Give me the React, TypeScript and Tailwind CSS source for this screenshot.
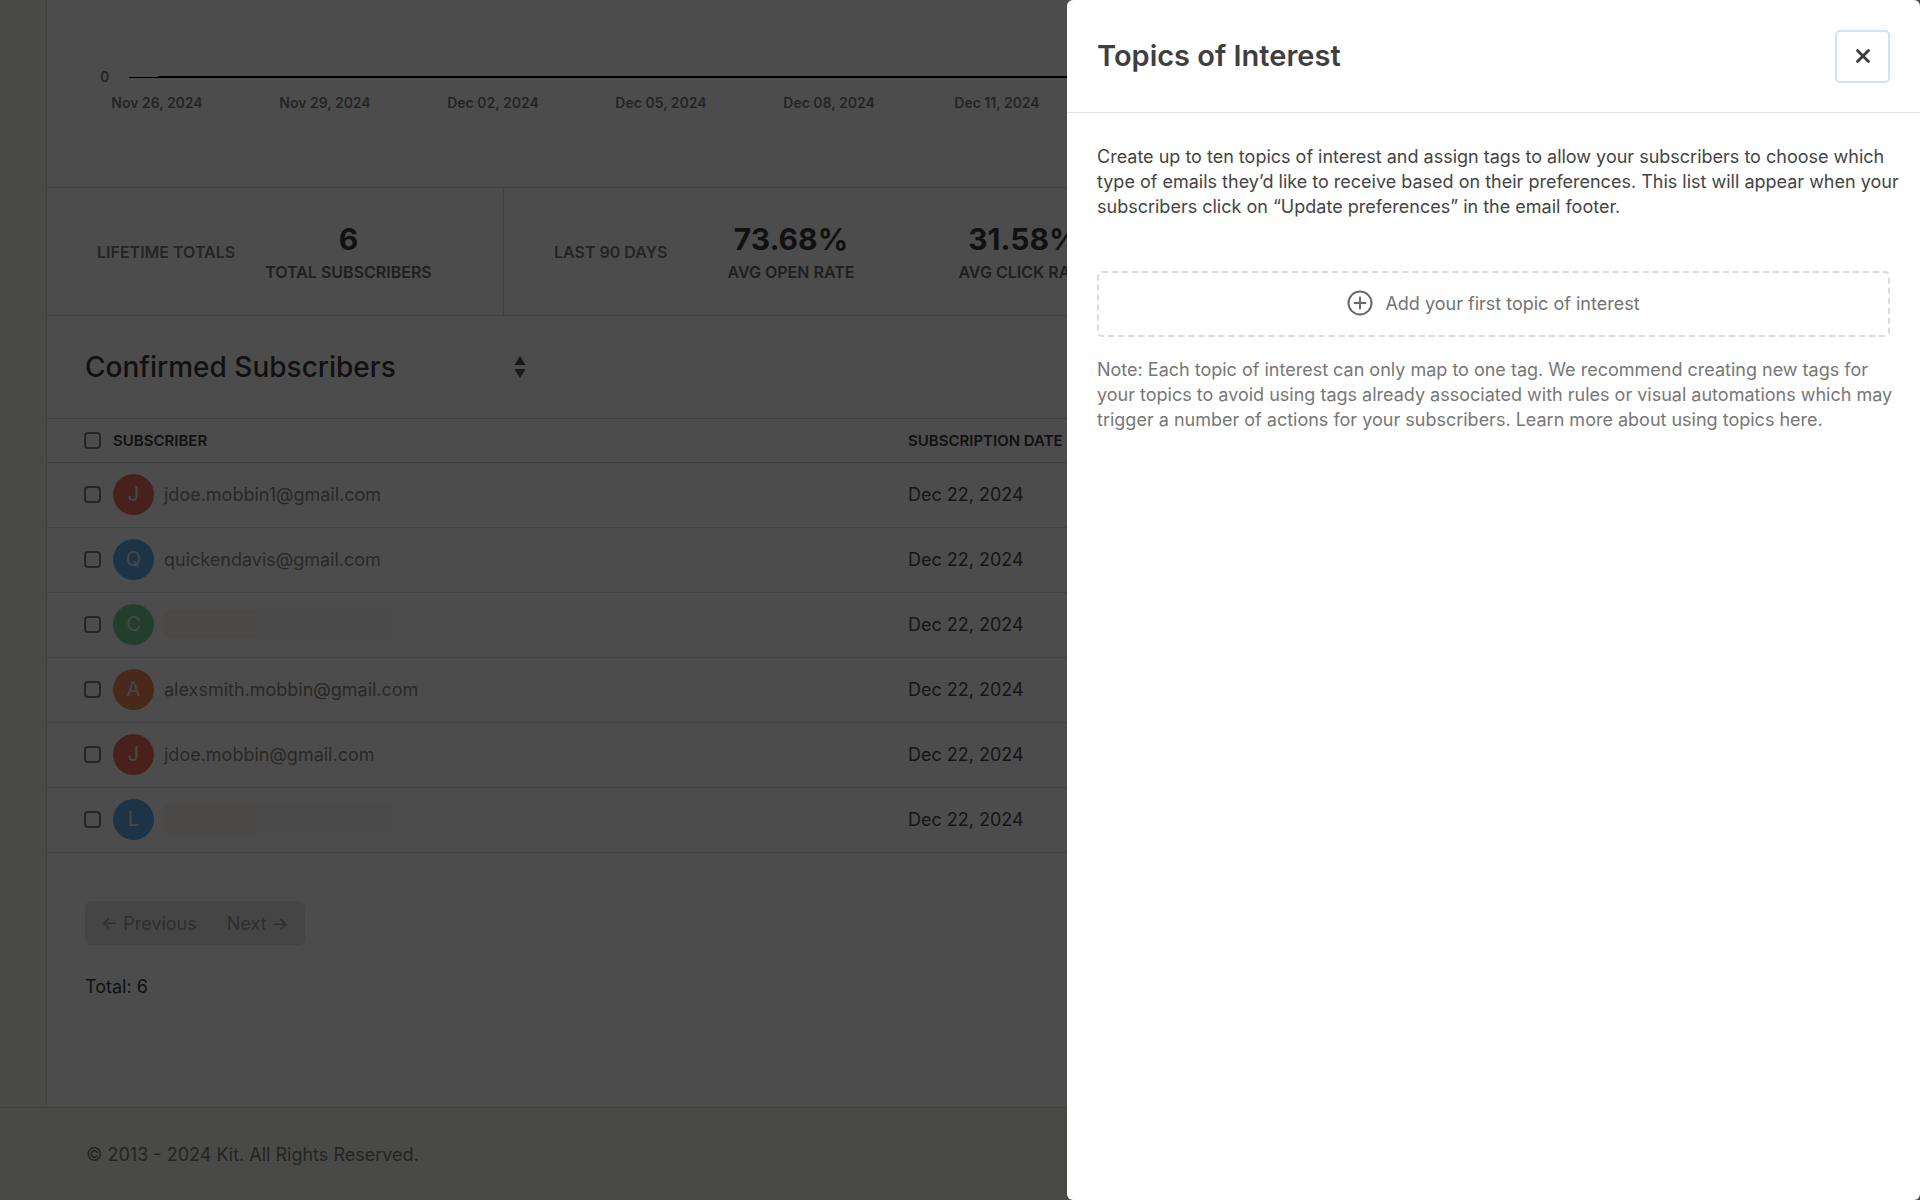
import { useState } from "react";
import { X } from "lucide-react";

const chartDates = ["Nov 26, 2024", "Nov 29, 2024", "Dec 02, 2024", "Dec 05, 2024", "Dec 08, 2024", "Dec 11, 2024"];

const subscribers = [
  { id: 1, email: "jdoe.mobbin1@gmail.com", initial: "J", color: "bg-[#f0705f]", date: "Dec 22, 2024" },
  { id: 2, email: "quickendavis@gmail.com", initial: "Q", color: "bg-[#5eaee6]", date: "Dec 22, 2024" },
  { id: 3, email: null, initial: "C", color: "bg-[#76d08c]", date: "Dec 22, 2024" },
  { id: 4, email: "alexsmith.mobbin@gmail.com", initial: "A", color: "bg-[#f08a5a]", date: "Dec 22, 2024" },
  { id: 5, email: "jdoe.mobbin@gmail.com", initial: "J", color: "bg-[#f0705f]", date: "Dec 22, 2024" },
  { id: 6, email: null, initial: "L", color: "bg-[#5eaee6]", date: "Dec 22, 2024" },
];

function Checkbox({ label }: { label: string }) {
  return (
    <input
      type="checkbox"
      aria-label={label}
      className="block size-[17px] appearance-none rounded-[4px] border-2 border-[#7c7c7c] bg-white checked:bg-[#3b3b3b]"
    />
  );
}

function Stat({ value, label }: { value: string; label: string }) {
  return (
    <div className="flex flex-col items-center pt-0.5 whitespace-nowrap">
      <span className="text-[30px]/[38px] font-bold text-[#3b3b3b]">{value}</span>
      <span className="text-base/[28px] font-semibold text-[#6a6a6a]">{label}</span>
    </div>
  );
}

function GrowthChart() {
  return (
    <section className="h-[188px] overflow-hidden border-b border-[#dadada] pt-[66px] text-sm font-semibold text-[#7a7a7a]">
      <div className="flex items-center">
        <span className="w-[82px] pl-[53px] leading-[22px]">0</span>
        <span className="h-px w-[29px] bg-black" />
        <span className="h-[2px] flex-1 bg-black" />
      </div>
      <div className="flex pt-1 pl-[26px]">
        {chartDates.map((d) => (
          <span key={d} className="w-[168px] shrink-0 text-center leading-[22px]">
            {d}
          </span>
        ))}
      </div>
    </section>
  );
}

function TopicsPanel({ onClose }: { onClose: () => void }) {
  return (
    <aside
      role="dialog"
      aria-labelledby="topics-title"
      className="fixed inset-y-0 right-0 w-[853px] max-w-full rounded-[6px] bg-white text-lg/[25px] text-[#444]"
    >
      <header className="flex h-[113px] items-center justify-between border-b border-[#e2e2e2] px-[30px]">
        <h2 id="topics-title" className="text-[29px]/[40px] font-semibold text-[#3f3f3f]">
          Topics of Interest
        </h2>
        <button
          type="button"
          aria-label="Close"
          onClick={onClose}
          className="flex h-[53px] w-[55px] items-center justify-center rounded-[5px] border-2 border-[#c9e5fc]"
        >
          <X className="size-[22px] text-[#3b3b3b]" strokeWidth={3} />
        </button>
      </header>

      <div className="pt-[31px] pr-5 pl-[30px]">
        <p>
          Create up to ten topics of interest and assign tags to allow your subscribers to choose which type of emails they’d like to receive based on
          their preferences. This list will appear when your subscribers click on “Update preferences” in the email footer.
        </p>
        <div className="mt-[52px] mb-5 pr-[10px]">
          <button
            type="button"
            className="flex h-[66px] w-full items-center justify-center gap-3 rounded-[5px] border-2 border-dashed border-[#dcdcdc] pb-0.5 text-[#737373]"
          >
            <svg viewBox="0 0 26 26" className="size-[26px] fill-none stroke-[#686868] stroke-2" strokeLinecap="round">
              <circle cx="13" cy="13" r="11.5" />
              <path d="M13 7.5v11M7.5 13h11" />
            </svg>
            Add your first topic of interest
          </button>
        </div>
        <p className="text-[#777]">
          Note: Each topic of interest can only map to one tag. We recommend creating new tags for your topics to avoid using tags already associated
          with rules or visual automations which may trigger a number of actions for your subscribers. Learn more about using topics here.
        </p>
      </div>
    </aside>
  );
}

export default function App() {
  const [open, setOpen] = useState(true);

  return (
    <div className="flex min-h-screen flex-col bg-[#f6f3ed] font-['Inter',sans-serif] text-lg/[25px] text-[#3b3b3b]">
      <main className="mx-[46px] border-x border-[#dadada] bg-white">
        <GrowthChart />

        {/* Totals */}
        <section className="flex h-[128px] overflow-hidden border-b border-[#dadada]">
          <div className="flex w-[457px] shrink-0 items-center gap-[30px] border-r border-[#dadada] pl-[50px]">
            <span className="text-base font-semibold whitespace-nowrap text-[#7a7a7a]">LIFETIME TOTALS</span>
            <Stat value="6" label="TOTAL SUBSCRIBERS" />
          </div>
          <div className="flex items-center pl-[50px]">
            <span className="mr-[60px] text-base font-semibold whitespace-nowrap text-[#7a7a7a]">LAST 90 DAYS</span>
            <div className="flex gap-[104px]">
              <Stat value="73.68%" label="AVG OPEN RATE" />
              <Stat value="31.58%" label="AVG CLICK RATE" />
            </div>
          </div>
        </section>

        {/* List filter */}
        <div className="flex h-[102px] items-center pl-[38px]">
          <div className="grid w-[441px] items-center">
            <select
              aria-label="Subscriber status"
              className="col-start-1 row-start-1 w-full appearance-none bg-transparent text-[28px]/[40px] font-medium text-[#3b3b3b]"
            >
              <option>Confirmed Subscribers</option>
            </select>
            <svg viewBox="0 0 12 22" className="pointer-events-none col-start-1 row-start-1 h-[22px] w-3 justify-self-end fill-[#555]">
              <path d="M6 0l5.5 9H.5zM6 22l5.5-9H.5z" />
            </svg>
          </div>
        </div>

        <table className="w-full table-fixed border-t border-[#dedede]">
          <thead>
            <tr className="h-[44px] border-b border-[#d0d0d0] text-left text-[15px]">
              <th className="w-[66px] pl-[37px]">
                <Checkbox label="Select all" />
              </th>
              <th className="w-[795px] font-semibold">SUBSCRIBER</th>
              <th className="font-semibold">SUBSCRIPTION DATE</th>
            </tr>
          </thead>
          <tbody>
            {subscribers.map((s) => (
              <tr key={s.id} className="h-[65px] border-b border-[#e2e2e2]">
                <td className="pb-0.5 pl-[37px]">
                  <Checkbox label={`Select ${s.email ?? s.initial}`} />
                </td>
                <td className="pb-0.5">
                  <div className="flex items-center gap-[10px]">
                    <span className={`flex size-[41px] items-center justify-center rounded-full text-xl text-[#eee] ${s.color}`}>{s.initial}</span>
                    {s.email ? (
                      <a href="#" className="text-[#888]">
                        {s.email}
                      </a>
                    ) : (
                      <span className="flex h-7 w-[228px] bg-[#fbfbfb]">
                        <span className="w-[92px] bg-[#f7f5f1]" />
                      </span>
                    )}
                  </div>
                </td>
                <td className="pb-0.5 text-[#4c4c4c]">{s.date}</td>
              </tr>
            ))}
          </tbody>
        </table>

        <div className="px-[38px] pt-12 pb-[108px]">
          <div className="flex h-11 w-fit rounded-[6px] bg-[#e8e8e8] text-[#999]">
            <button type="button" disabled className="pr-[15px] pl-4">
              ← Previous
            </button>
            <button type="button" disabled className="pr-4 pl-[15px]">
              Next →
            </button>
          </div>
          <p className="mt-[29px]">Total: 6</p>
        </div>
      </main>

      <footer className="flex flex-1 items-center border-t border-[#dadada] pl-[86px] text-[#7a7a7a]">© 2013 - 2024 Kit. All Rights Reserved.</footer>

      {open && (
        <>
          <div className="fixed inset-0 bg-black/70" />
          <TopicsPanel onClose={() => setOpen(false)} />
        </>
      )}
    </div>
  );
}
